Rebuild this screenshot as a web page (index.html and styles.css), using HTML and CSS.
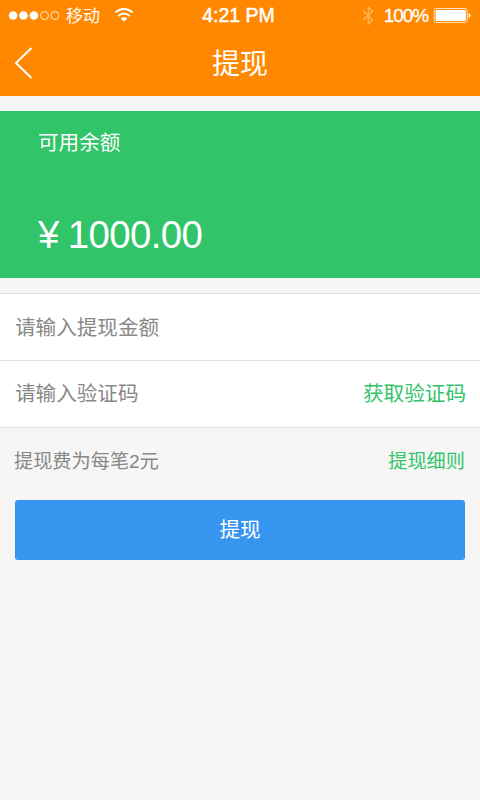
FILE: index.html
```html
<!DOCTYPE html>
<html lang="zh-CN">
<head>
<meta charset="utf-8">
<title>提现</title>
<link rel="stylesheet" href="styles.css">
</head>
<body>
<header class="header">
  <div class="status">
    <div class="status-left">
      <svg class="signal" width="52" height="10" viewBox="0 0 52 10"><g fill="#fff"><circle cx="5.1" cy="4.500" r="4.3"/><circle cx="15.5" cy="4.500" r="4.3"/><circle cx="25.9" cy="4.500" r="4.3"/></g><g fill="none" stroke="#fff" stroke-width=".8"><circle cx="36.5" cy="4.500" r="4"/><circle cx="47" cy="4.500" r="4"/></g></svg>
      <span class="carrier">移动</span>
      <svg class="wifi" width="20" height="15" viewBox="0 0 20 15"><g fill="none" stroke="#fff" stroke-width="2"><path d="M1.3 4.500Q10-2.800 18.700 4.500"/><path d="M4.300 8Q10 3 15.700 8"/></g><path fill="#fff" d="M6.700 10.500Q10 7.500 13.300 10.500L10 13.700Z"/></svg>
    </div>
    <span class="time">4:21 PM</span>
    <div class="status-right">
      <svg class="bluetooth" width="13" height="20" viewBox="0 0 13 20"><path d="M1.200 5L10.500 13.700L6.300 18V1L10.500 5.300L1.200 14" fill="none" stroke="#ffb45c" stroke-width="1.400"/></svg>
      <span class="percent">100%</span>
      <svg class="battery" width="38" height="16" viewBox="0 0 38 16"><rect x="1.200" y=".5" width="33" height="14" rx="2" fill="none" stroke="#ffe0bb"/><rect x="2.600" y="1.900" width="30.200" height="11.200" rx=".8" fill="#fff"/><path fill="#fff" d="M35.500 5.200Q37.500 5.700 37.500 7.500T35.500 9.900Z"/></svg>
    </div>
  </div>
  <div class="navbar">
    <svg class="back" width="20" height="34" viewBox="0 0 20 34"><path d="M17.500 2L2 17L17.500 32" fill="none" stroke="#fff" stroke-width="2"/></svg>
    <h1 class="title">提现</h1>
  </div>
</header>
<main>
  <section class="balance">
    <div class="balance-label">可用余额</div>
    <div class="balance-amount"><span class="yen">¥</span><span>1000.00</span></div>
  </section>
  <section class="form">
    <div class="row"><span>请输入提现金额</span></div>
    <div class="row"><span>请输入验证码</span><a class="link">获取验证码</a></div>
  </section>
  <div class="note"><span>提现费为每笔2元</span><a class="link">提现细则</a></div>
  <button class="submit">提现</button>
</main>
</body>
</html>
```
FILE: styles.css
```css
* {
  box-sizing: border-box;
}

body {
  margin: 0;
  min-height: 800px;
  background: #f6f6f6;
  font-family: "Liberation Sans", "Noto Sans CJK SC", sans-serif;
  font-size: 20.6px;
  color: #888;
}

.header {
  height: 96px;
  background: #ff8800;
  color: #fff;
}

.status {
  display: grid;
  grid-template-columns: 1fr auto 1fr;
  align-items: center;
  height: 31px;
  padding: 0 9px 0 8px;
}

.status-left,
.status-right {
  display: flex;
  align-items: center;
}

.status-right {
  justify-content: flex-end;
}

.carrier {
  margin-left: 6px;
  padding-top: 2px;
  font-size: 17px;
  line-height: 28px;
}

.wifi {
  margin-left: 14px;
}

.time {
  margin-right: 2px;
  padding-bottom: 1px;
  font-size: 19.5px;
  line-height: 28px;
  -webkit-text-stroke: 0.5px #fff;
}

.percent {
  margin: 0 5px 0 9px;
  font-size: 19px;
  letter-spacing: -1.1px;
  -webkit-text-stroke: 0.3px #fff;
}

.navbar {
  display: grid;
  grid-template-columns: 1fr auto 1fr;
  align-items: center;
  height: 65px;
  padding: 0 14px;
}

.back {
  margin-bottom: 2px;
}

.title {
  margin: 0;
  padding-top: 3px;
  font-size: 28px;
  font-weight: 400;
  line-height: 62px;
}

.balance {
  height: 167px;
  margin-top: 15px;
  padding: 17px 38px 0;
  background: #32c469;
  color: #fff;
}

.balance-label {
  line-height: 30px;
}

.balance-amount {
  display: flex;
  margin-top: 54px;
  font-size: 38.4px;
  line-height: 46px;
  letter-spacing: -0.6px;
}

.yen {
  margin-right: 9px;
}

.form {
  margin-top: 15px;
  border-top: 1px solid #e0e0e0;
  background: #fff;
}

.row {
  display: flex;
  justify-content: space-between;
  height: 67px;
  padding: 0 14px 0 15px;
  border-bottom: 1px solid #dedede;
  line-height: 67px;
}

.row:last-child {
  height: 66.5px;
  line-height: 65px;
}

.link {
  color: #32c469;
}

.note {
  display: flex;
  justify-content: space-between;
  height: 72px;
  padding: 0 15px 0 14px;
  font-size: 19.2px;
  line-height: 68px;
}

.submit {
  display: block;
  width: 450px;
  height: 60px;
  margin: 0 auto;
  padding: 0;
  border: 0;
  border-radius: 3px;
  background: #3595ef;
  color: #fff;
  font: inherit;
  line-height: 60px;
}
```
